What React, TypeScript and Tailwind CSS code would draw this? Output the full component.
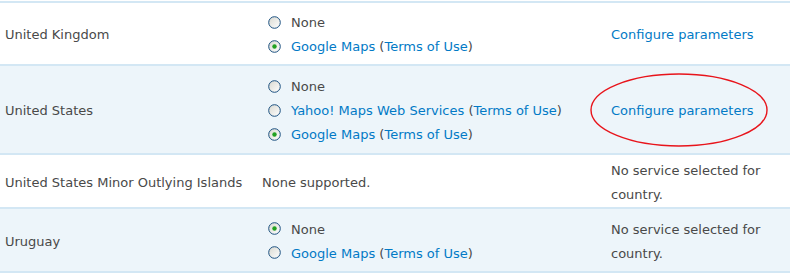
import React from "react";

type Option = { label: string; link?: boolean; terms?: boolean; checked?: boolean };

type Row = {
  country: string;
  options: Option[] | null;
  action: "configure" | "none";
  height: string;
  even: boolean;
};

const rows: Row[] = [
  {
    country: "United Kingdom",
    options: [
      { label: "None" },
      { label: "Google Maps", link: true, terms: true, checked: true },
    ],
    action: "configure",
    height: "h-[63px]",
    even: false,
  },
  {
    country: "United States",
    options: [
      { label: "None" },
      { label: "Yahoo! Maps Web Services", link: true, terms: true },
      { label: "Google Maps", link: true, terms: true, checked: true },
    ],
    action: "configure",
    height: "h-[89px]",
    even: true,
  },
  {
    country: "United States Minor Outlying Islands",
    options: null,
    action: "none",
    height: "h-[54px]",
    even: false,
  },
  {
    country: "Uruguay",
    options: [
      { label: "None", checked: true },
      { label: "Google Maps", link: true, terms: true },
    ],
    action: "none",
    height: "h-[64px]",
    even: true,
  },
];

function Radio({ checked }: { checked?: boolean }) {
  return (
    <svg width="13" height="13" viewBox="0 0 13 13" className="shrink-0 -mt-[2px]">
      <defs>
        <linearGradient id="rg" x1="0" y1="0" x2="1" y2="1">
          <stop offset="0" stopColor="#d8d8d0" />
          <stop offset="1" stopColor="#ffffff" />
        </linearGradient>
      </defs>
      <circle cx="6.5" cy="6.5" r="5.8" fill="url(#rg)" stroke="#1c5180" strokeWidth="1" />
      {checked && <circle cx="6.5" cy="6.5" r="2.2" fill="#21a121" />}
    </svg>
  );
}

export default function App() {
  return (
    <div className="w-[798px] h-[275px] bg-white pt-px font-['DejaVu_Sans',Verdana,sans-serif] text-[13px] text-[#494949] relative">
      <div className="w-[790px] border-t-2 border-[#d3e7f4]">
        {rows.map((row) => (
          <div
            key={row.country}
            className={`grid grid-cols-[257px_349px_184px] items-center border-b-2 border-[#d3e7f4] pt-[3px] ${row.height} ${row.even ? "bg-[#edf5fa]" : "bg-white"}`}
          >
            <div className="pl-[5px]">{row.country}</div>
            <div className="pl-[5px]">
              {row.options ? (
                <div className="flex flex-col pl-[6px]">
                  {row.options.map((o) => (
                    <div key={o.label} className="flex items-center gap-[10px] h-[24px]">
                      <Radio checked={o.checked} />
                      <span>
                        <span className={o.link ? "text-[#027ac6]" : ""}>{o.label}</span>
                        {o.terms && (
                          <>
                            {" ("}
                            <span className="text-[#027ac6]">Terms of Use</span>
                            {")"}
                          </>
                        )}
                      </span>
                    </div>
                  ))}
                </div>
              ) : (
                <span>None supported.</span>
              )}
            </div>
            <div className="pl-[5px] pr-2 leading-[24px]">
              {row.action === "configure" ? (
                <span className="text-[#027ac6]">Configure parameters</span>
              ) : (
                <span>No service selected for country.</span>
              )}
            </div>
          </div>
        ))}
      </div>
      <svg className="absolute left-0 top-0 pointer-events-none" width="798" height="275">
        <ellipse cx="679" cy="110" rx="88" ry="36" fill="none" stroke="#e8141b" strokeWidth="1.4" />
      </svg>
    </div>
  );
}
